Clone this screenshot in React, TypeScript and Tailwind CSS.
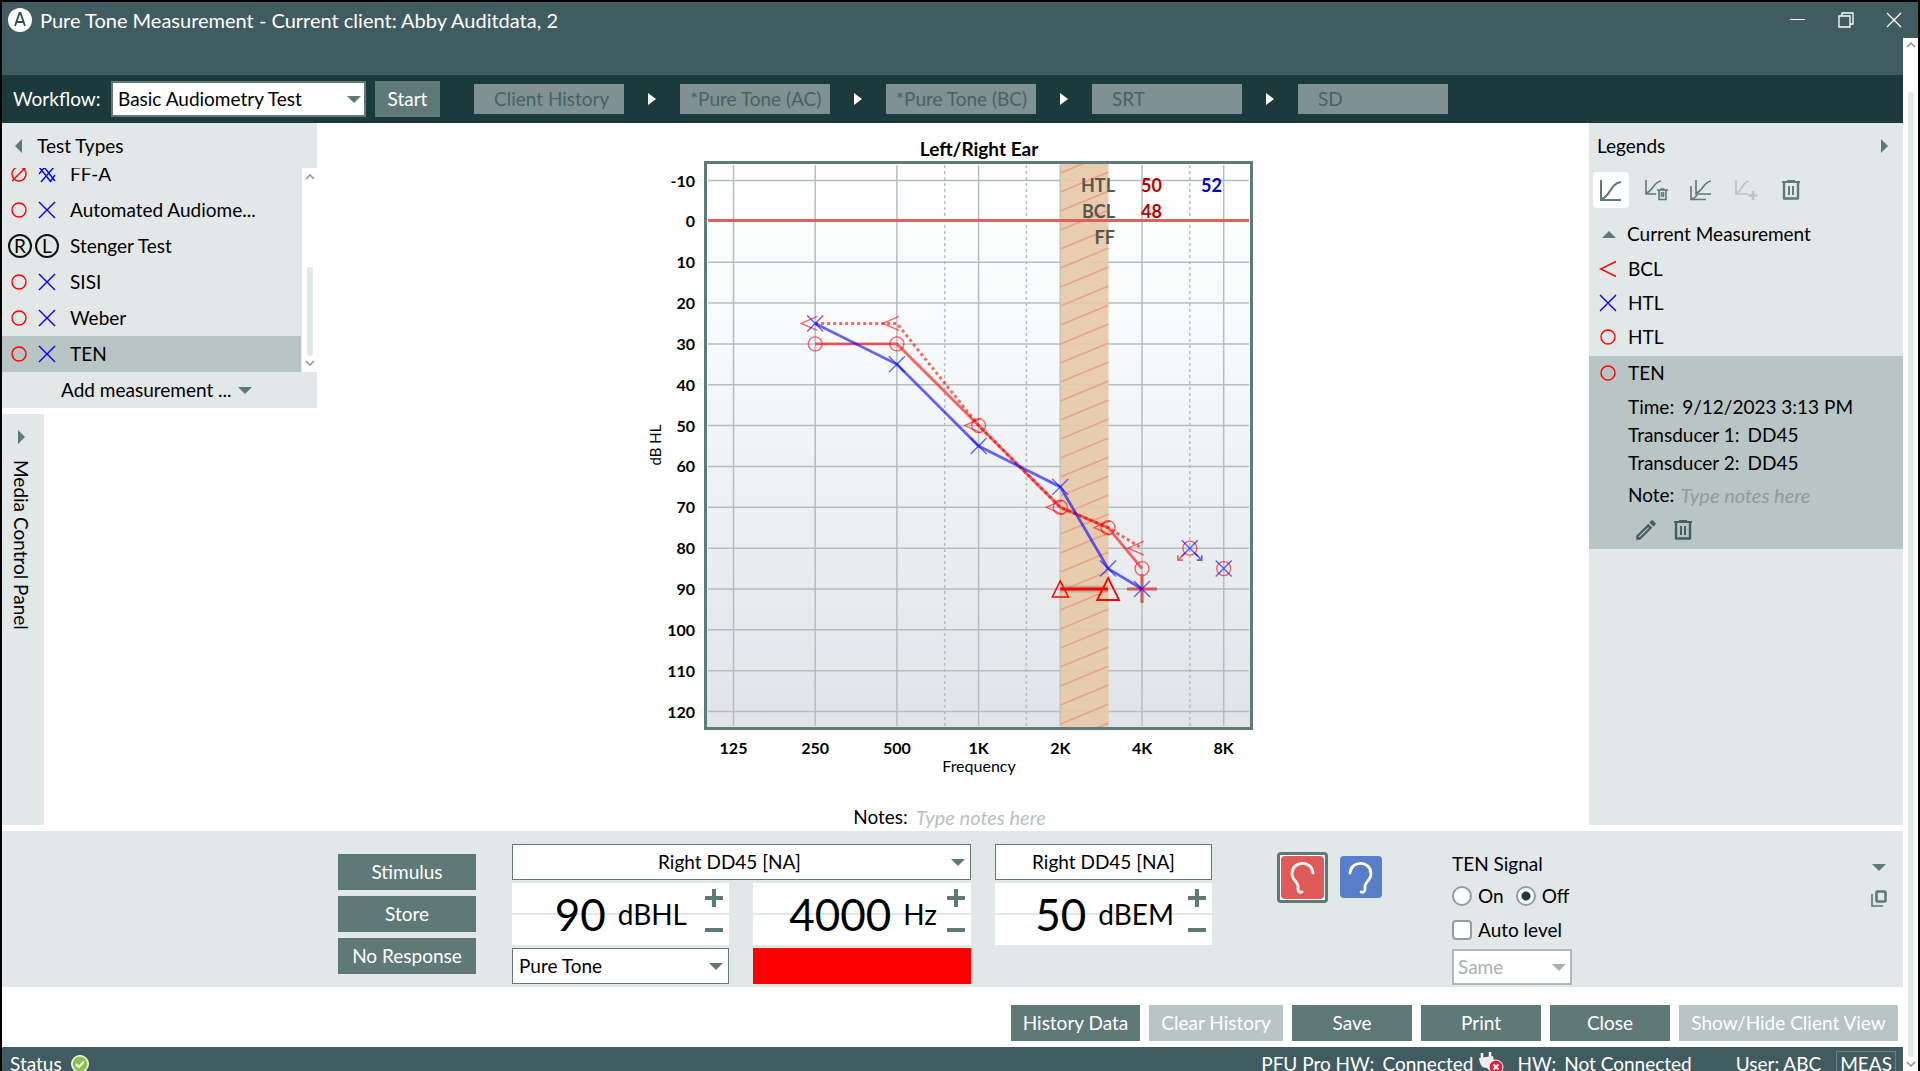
import React from "react";

const RED = "#ff0000";
const BLUE = "#0000ff";

type Mark = "circle" | "cross" | "less" | "circleSlash" | "doubleCross";

interface IMarkIconProps {
  mark: Mark;
  className?: string;
}

const MarkIcon: React.FC<IMarkIconProps> = ({ mark, className = "" }) => (
  <svg
    viewBox="0 0 18 18"
    fill="none"
    stroke={mark === "cross" || mark === "doubleCross" ? BLUE : RED}
    strokeWidth="1.4"
    className={`w-[18px] h-[18px] shrink-0 ${className}`}
  >
    {(mark === "circle" || mark === "circleSlash") && (
      <circle cx="9" cy="9" r="7" />
    )}
    {mark === "circleSlash" && <path d="M2 16 16 2" />}
    {mark === "cross" && <path d="M1 1 17 17M17 1 1 17" />}
    {mark === "doubleCross" && (
      <path d="M1 2 13 17M6 2 17 16M16 2 3 17M1 9 6 3M12 17 17 10" />
    )}
    {mark === "less" && <path d="M17 1.500 1.500 9 17 16.500" />}
  </svg>
);

interface ITriangleProps {
  dir: "up" | "down" | "left" | "right";
  className?: string;
}

const trianglePaths = {
  up: "M0 11 7 4 14 11Z",
  down: "M0 4H14L7 11Z",
  left: "M11 0V14L4 7Z",
  right: "M4 0V14L11 7Z",
};

const Triangle: React.FC<ITriangleProps> = ({ dir, className = "" }) => (
  <svg
    viewBox="0 0 14 14"
    className={`w-3.5 h-3.5 shrink-0 fill-[#5f7977] ${className}`}
  >
    <path d={trianglePaths[dir]} />
  </svg>
);

const TrashIcon: React.FC = () => (
  <svg viewBox="0 0 20 22" className="w-5 h-[22px]" fill="none" stroke="currentColor">
    <path d="M1 3H19M6 2H14" strokeWidth="2.200" />
    <path d="M3 4V19.500H17V4" strokeWidth="2.400" strokeLinejoin="round" />
    <path d="M8 7V16M12 7V16" strokeWidth="2" />
  </svg>
);

interface ISelectProps {
  label: string;
  value: string;
  className?: string;
  selectClass?: string;
  arrowClass?: string;
  disabled?: boolean;
}

const Select: React.FC<ISelectProps> = ({
  label,
  value,
  className = "",
  selectClass = "",
  arrowClass = "",
  disabled,
}) => (
  <div className={`relative h-9 ${className}`}>
    <select
      aria-label={label}
      disabled={disabled}
      className={`appearance-none w-full h-full bg-white border-[#5f7977] ${selectClass}`}
    >
      <option>{value}</option>
    </select>
    <Triangle
      dir="down"
      className={`absolute right-1.5 top-[11px] pointer-events-none ${arrowClass}`}
    />
  </div>
);

const steps = [
  { name: "Client History", pad: "pl-5" },
  { name: "*Pure Tone (AC)", pad: "pl-2.5" },
  { name: "*Pure Tone (BC)", pad: "pl-2.5" },
  { name: "SRT", pad: "pl-5" },
  { name: "SD", pad: "pl-5" },
];

const TitleBar: React.FC = () => (
  <header className="flex items-center h-9 shrink-0 bg-[#415c60] text-white">
    <svg viewBox="0 0 24 24" className="w-6 h-6 ml-1.5 mr-2">
      <circle cx="12" cy="12" r="12" fill="#fff" />
      <path
        d="M7 18 11.500 5H12.500L17 18M8.500 14H15.500"
        fill="none"
        stroke="#2f4b4e"
        strokeWidth="1.800"
      />
    </svg>
    <h1 className="text-[20px]">
      Pure Tone Measurement - Current client: Abby Auditdata, 2
    </h1>
    <div className="flex gap-8 ml-auto mr-4">
      <button aria-label="Minimize">
        <svg viewBox="0 0 16 16" className="w-4 h-4" stroke="#fff">
          <path d="M0 7.500H15" />
        </svg>
      </button>
      <button aria-label="Restore">
        <svg viewBox="0 0 16 16" className="w-4 h-4" fill="none" stroke="#fff" strokeWidth="1.300">
          <path d="M1 4H12V15H1ZM4 4V1H15V12H12" />
        </svg>
      </button>
      <button aria-label="Close window">
        <svg viewBox="0 0 16 16" className="w-4 h-4" stroke="#fff" strokeWidth="1.300">
          <path d="M1 1 15 15M15 1 1 15" />
        </svg>
      </button>
    </div>
  </header>
);

const WorkflowBar: React.FC = () => (
  <div className="flex items-center h-12 shrink-0 pl-[11px] bg-[#1c393c] text-white">
    <span className="w-[98px]">Workflow:</span>
    <Select
      label="Workflow"
      value="Basic Audiometry Test"
      className="w-[255px] text-black"
      selectClass="border-2 pl-[5px]"
      arrowClass="right-[5px]"
    />
    <button className="w-[65px] h-9 ml-[9px] mr-[34px] bg-[#5f7977]">Start</button>
    {steps.map((step, i) => (
      <React.Fragment key={step.name}>
        {i > 0 && (
          <span className="flex justify-center w-14">
            <svg viewBox="0 0 8 12" className="w-2 h-3 fill-white">
              <path d="M0 0 8 6 0 12Z" />
            </svg>
          </span>
        )}
        <button
          disabled
          className={`w-[150px] h-[30px] bg-[#7f9192] text-[#4b6163] text-left whitespace-nowrap ${step.pad}`}
        >
          {step.name}
        </button>
      </React.Fragment>
    ))}
  </div>
);

const tests: { name: string; marks: Mark[] }[] = [
  { name: "FF-A", marks: ["circleSlash", "doubleCross"] },
  { name: "Automated Audiome...", marks: ["circle", "cross"] },
  { name: "Stenger Test", marks: [] },
  { name: "SISI", marks: ["circle", "cross"] },
  { name: "Weber", marks: ["circle", "cross"] },
  { name: "TEN", marks: ["circle", "cross"] },
];

const Chevron: React.FC<{ down?: boolean }> = ({ down }) => (
  <svg viewBox="0 0 10 6" className="w-2.5 h-1.5" fill="none" stroke="#8d9494" strokeWidth="1.600">
    <path d={down ? "M1 1 5 5 9 1" : "M1 5 5 1 9 5"} />
  </svg>
);

const TestTypes: React.FC = () => (
  <section className="w-[315px] bg-[#e2e7e7]">
    <h2 className="flex items-center h-[45px] pl-[9px] gap-3">
      <Triangle dir="left" />
      Test Types
    </h2>
    <div className="flex h-[204px]">
      <ul className="flex flex-col justify-end flex-1 overflow-hidden">
        {tests.map((test) => (
          <li
            key={test.name}
            className={`flex items-center h-9 shrink-0 ${
              test.name === "TEN" ? "bg-[#b9c4c4]" : ""
            }`}
          >
            <span className="flex items-center w-[68px] pl-2 gap-2.5">
              {test.marks.map((mark) => (
                <MarkIcon key={mark} mark={mark} />
              ))}
              {test.marks.length === 0 && (
                <span className="flex gap-[3px] -ml-0.5">
                  {["R", "L"].map((side) => (
                    <span
                      key={side}
                      className="flex items-center justify-center w-6 h-6 border-2 border-[#111] rounded-full"
                    >
                      {side}
                    </span>
                  ))}
                </span>
              )}
            </span>
            {test.name}
          </li>
        ))}
      </ul>
      <div className="flex flex-col items-center w-[15px] ml-px py-1.5 bg-white">
        <Chevron />
        <span className="w-1.5 h-[90px] mt-[87px] mb-1 rounded-full bg-[#e2e7e7]" />
        <Chevron down />
      </div>
    </div>
    <button className="flex items-center h-9 pl-[59px] gap-1.5">
      Add measurement ...
      <Triangle dir="down" />
    </button>
  </section>
);

// chart geometry
const xAt = (hz: number) => 85.5 + Math.log2(hz / 125) * 81.7;
const yAt = (db: number) => 44.5 + (db + 10) * 4.085;

type Point = [number, number];

const rightHtl: Point[] = [[250, 30], [500, 30], [1000, 50], [2000, 70], [3000, 75], [4000, 85]];
const rightBcl: Point[] = [[250, 25], [500, 25], [1000, 50], [2000, 70], [3000, 75], [4000, 80]];
const leftHtl: Point[] = [[250, 25], [500, 35], [1000, 55], [2000, 65], [3000, 85], [4000, 90]];
const isolated: Point[] = [[6000, 80], [8000, 85]];

const toLine = (points: Point[]) =>
  points.map(([hz, db]) => `${xAt(hz)},${yAt(db)}`).join(" ");

const octaves = [
  { hz: 125, label: "125" },
  { hz: 250, label: "250" },
  { hz: 500, label: "500" },
  { hz: 1000, label: "1K" },
  { hz: 2000, label: "2K" },
  { hz: 4000, label: "4K" },
  { hz: 8000, label: "8K" },
];

const levels = Array.from({ length: 14 }, (_, i) => i * 10 - 10);

const Audiogram: React.FC = () => (
  <svg viewBox="0 0 608 650" className="w-[608px] h-[650px] shrink-0">
    <defs>
      <linearGradient id="plot" x1="0" y1="0" x2="0" y2="1">
        <stop offset="0" stopColor="#fff" />
        <stop offset="0.300" stopColor="#f8fafb" />
        <stop offset="1" stopColor="#e0e4e8" />
      </linearGradient>
      <pattern id="hatch" width="48" height="19" patternUnits="userSpaceOnUse" x="412.500" y="36">
        <path
          d="M-2 20.800 50 -.8M-2 1.800 50 -19.800M-2 39.800 50 18.200"
          stroke="#e39a80"
          strokeOpacity="0.800"
          strokeWidth="1.600"
        />
      </pattern>
    </defs>
    <text x="331" y="20" textAnchor="middle" className="text-[19px] font-bold">
      Left/Right Ear
    </text>
    <rect x="57.500" y="26.500" width="546" height="566" fill="url(#plot)" stroke="#5f7b79" strokeWidth="3" />
    <g stroke="#b6bcc0" strokeWidth="1.500">
      {levels.map((db) => (
        <path key={db} d={`M60 ${yAt(db)}H601`} />
      ))}
      {octaves.map(({ hz }) => (
        <path key={hz} d={`M${xAt(hz)} 29V590`} />
      ))}
      {[750, 1500, 6000].map((hz) => (
        <path key={hz} d={`M${xAt(hz)} 29V590`} strokeDasharray="3 3" />
      ))}
    </g>
    <rect x="412.500" y="28" width="48" height="563" fill="#e6c9a8" fillOpacity="0.920" />
    <rect x="412.500" y="28" width="48" height="563" fill="url(#hatch)" />
    <path d="M60 84.500H601" stroke="#dc625c" strokeWidth="3" />

    <g className="text-[16px] font-bold">
      {levels.map((db) => (
        <text key={db} x="47" y={yAt(db) + 6} textAnchor="end">
          {db}
        </text>
      ))}
      {octaves.map(({ hz, label }) => (
        <text key={hz} x={xAt(hz)} y="618" textAnchor="middle">
          {label}
        </text>
      ))}
    </g>
    <text x="331" y="636" textAnchor="middle" className="text-[16px]">
      Frequency
    </text>
    <text transform="translate(13 309) rotate(-90)" textAnchor="middle" className="text-[15px]">
      dB HL
    </text>

    <g className="text-[18px] font-bold" fill="#595450">
      <text x="467" y="56" textAnchor="end">HTL</text>
      <text x="467" y="82" textAnchor="end">BCL</text>
      <text x="467" y="108" textAnchor="end">FF</text>
      <text x="493" y="56" fill="#b80000">50</text>
      <text x="493" y="82" fill="#b80000">48</text>
      <text x="553" y="56" fill="#0000c8">52</text>
    </g>

    <g fill="none" stroke={RED} strokeOpacity="0.600">
      <polyline points={toLine(rightHtl)} strokeWidth="2.800" />
      <polyline points={toLine(rightBcl)} strokeWidth="3" strokeDasharray="3 3" />
      {[...rightHtl, ...isolated].map(([hz, db]) => (
        <circle key={hz} cx={xAt(hz)} cy={yAt(db)} r="7" strokeWidth="1.400" />
      ))}
      {rightBcl.map(([hz, db]) => (
        <path
          key={hz}
          d={`M${xAt(hz) + 2} ${yAt(db) - 7}l-16 7 16 7`}
          strokeWidth="1.400"
        />
      ))}
      <path d={`M${xAt(6000) - 5} ${yAt(80) + 5}l-7 7m0 -5v5h5`} strokeWidth="1.600" />
    </g>

    <path
      d={`M${xAt(4000) - 15} ${yAt(90)}h30m-15 -15v29`}
      stroke="#dc5550"
      strokeWidth="3"
    />

    <g fill="none" stroke={BLUE} strokeOpacity="0.600">
      <polyline points={toLine(leftHtl)} strokeWidth="2.800" />
      {[...leftHtl, ...isolated].map(([hz, db]) => (
        <path
          key={hz}
          d={`M${xAt(hz) - 8} ${yAt(db) - 8}l16 16m0 -16l-16 16`}
          strokeWidth="1.400"
        />
      ))}
      <path d={`M${xAt(6000) + 5} ${yAt(80) + 5}l7 7m0 -5v5h-5`} strokeWidth="1.600" />
    </g>

    <g fill="none" stroke={RED}>
      <path d={`M${xAt(2000)} ${yAt(90)}H${xAt(3000)}`} stroke="#8a8a70" strokeOpacity="0.400" strokeWidth="7" />
      <path d={`M${xAt(2000)} ${yAt(90)}H${xAt(3000)}`} strokeWidth="3" />
      <path d={`M${xAt(2000)} ${yAt(90) - 8}l8 16h-16z`} strokeWidth="1.500" />
      <path d={`M${xAt(3000)} ${yAt(90) - 11}l11 22h-22z`} strokeWidth="1.800" />
    </g>
  </svg>
);

const toolIcons = [
  {
    name: "Show curve",
    tone: "bg-white text-[#5f7977]",
    icon: (
      <g strokeWidth="2">
        <path d="M2 1V21H22" />
        <path d="M2 20C11 19 11 4 22 3" />
      </g>
    ),
  },
  {
    name: "Delete curve",
    tone: "text-[#5f7977]",
    icon: (
      <g strokeWidth="1.600">
        <path d="M2 1V15H12" />
        <path d="M2 14C9 13 9 3 17 2" />
        <path d="M13 11H24M15 11V20.500H22V11M17.500 13V18M19.500 13V18M16.500 10H20.500" />
      </g>
    ),
  },
  {
    name: "Compare curves",
    tone: "text-[#5f7977]",
    icon: (
      <g strokeWidth="1.600">
        <path d="M7 1V15H22" />
        <path d="M7 14C14 13 14 3 22 2" />
        <path d="M2 7V20.500H17M2 20C5 19.500 7 18 8 15.500" />
      </g>
    ),
  },
  {
    name: "Add curve",
    tone: "text-[#b9c4c4]",
    icon: (
      <g strokeWidth="1.600">
        <path d="M2 1V15H14" />
        <path d="M2 14C8 13 8 3 15 2" />
        <path d="M19 12V21M14.500 16.500H23.500" strokeWidth="2.600" />
      </g>
    ),
  },
];

const legend: { name: string; mark: Mark }[] = [
  { name: "BCL", mark: "less" },
  { name: "HTL", mark: "cross" },
  { name: "HTL", mark: "circle" },
];

const Legends: React.FC = () => (
  <aside className="w-[314px] shrink-0 mb-1.5 bg-[#e2e7e7]">
    <h2 className="flex items-center justify-between h-[45px] pl-2 pr-3">
      Legends
      <Triangle dir="right" />
    </h2>
    <div className="flex gap-[9px] pl-1 pt-1">
      {toolIcons.map((tool) => (
        <button
          key={tool.name}
          aria-label={tool.name}
          className={`flex items-center justify-center w-9 h-9 rounded-sm ${tool.tone}`}
        >
          <svg viewBox="0 0 24 22" className="w-6 h-[22px]" fill="none" stroke="currentColor">
            {tool.icon}
          </svg>
        </button>
      ))}
      <button
        aria-label="Delete all"
        className="flex items-center justify-center w-9 h-9 text-[#5f7977]"
      >
        <TrashIcon />
      </button>
    </div>
    <h3 className="flex items-center h-[52px] pl-[13px] gap-[11px]">
      <Triangle dir="up" />
      Current Measurement
    </h3>
    <ul className="-mt-2">
      {legend.map((item) => (
        <li key={item.name + item.mark} className="flex items-center h-[34px] pl-2.5 gap-[11px]">
          <MarkIcon mark={item.mark} />
          {item.name}
        </li>
      ))}
    </ul>
    <div className="h-[193px] mt-0.5 bg-[#b9c4c4]">
      <div className="flex items-center h-[34px] pl-2.5 gap-[11px]">
        <MarkIcon mark="circle" />
        TEN
      </div>
      <dl className="pl-[39px] leading-7">
        <div className="flex gap-2 mt-[3px]">
          <dt>Time:</dt>
          <dd>9/12/2023 3:13 PM</dd>
        </div>
        <div className="flex gap-2">
          <dt>Transducer 1:</dt>
          <dd>DD45</dd>
        </div>
        <div className="flex gap-2">
          <dt>Transducer 2:</dt>
          <dd>DD45</dd>
        </div>
      </dl>
      <label className="flex items-center h-9 pl-[39px] gap-1.5">
        Note:
        <input
          placeholder="Type notes here"
          className="w-40 text-[20px] italic placeholder:text-[#8f9c9c]"
        />
      </label>
      <div className="flex items-center gap-3.5 pl-11 pt-1 text-[#465e60]">
        <button aria-label="Edit">
          <svg viewBox="0 0 24 24" className="w-[26px] h-[26px]" fill="currentColor">
            <path d="M14 9.500 14.700 10.200 6.200 18.700H5.300V17.800L14 9.500M17.660 3c-.25 0-.51.1-.7.290l-1.830 1.830 3.750 3.750 1.830-1.830c.39-.39.39-1.020 0-1.410l-2.340-2.340c-.2-.2-.45-.29-.71-.29zM14.060 6.190 3 17.250V21h3.750L17.810 9.940l-3.750-3.750z" fillRule="evenodd" />
          </svg>
        </button>
        <button aria-label="Delete">
          <TrashIcon />
        </button>
      </div>
    </div>
  </aside>
);

interface IStepperProps {
  label: string;
  value: string;
  unit: string;
  unitClass?: string;
}

const Stepper: React.FC<IStepperProps> = ({
  label,
  value,
  unit,
  unitClass = "mr-[18px]",
}) => (
  <div
    aria-label={label}
    className="flex items-center justify-end h-[62px] pr-1.5 bg-[linear-gradient(#fff_30px,#e2e7e7_30px,#e2e7e7_32px,#fff_32px)]"
  >
    <span className="text-[44px] leading-none">{value}</span>
    <span className={`ml-3 text-[28px] leading-none ${unitClass}`}>{unit}</span>
    <div className="flex flex-col gap-3.5">
      <button aria-label={`Increase ${label}`}>
        <svg viewBox="0 0 18 18" className="w-[18px] h-[18px]" stroke="#5f7977" strokeWidth="4">
          <path d="M0 9H18M9 0V18" />
        </svg>
      </button>
      <button aria-label={`Decrease ${label}`}>
        <svg viewBox="0 0 18 18" className="w-[18px] h-[18px]" stroke="#5f7977" strokeWidth="4">
          <path d="M0 9H18" />
        </svg>
      </button>
    </div>
  </div>
);

const EarIcon: React.FC<{ flip?: boolean }> = ({ flip }) => (
  <svg viewBox="0 0 42 42" className="w-[42px] h-[42px]" fill="none" stroke="#fff" strokeWidth="2.800" strokeLinecap="round">
    <path
      d={
        flip
          ? "M10 17C11 4 31 4 31 18C31 24 24 27 25 31C25.500 35 24 37 21 36"
          : "M32 17C31 4 11 4 11 18C11 24 18 27 17 31C16.500 35 18 37 21 36"
      }
    />
  </svg>
);

const radioClass =
  "appearance-none w-5 h-5 mr-1.5 rounded-full border-2 border-[#8fa09f] bg-white checked:bg-[radial-gradient(#1c393c_4px,#fff_5px)]";

const ControlPanel: React.FC = () => (
  <section className="flex h-[156px] shrink-0 bg-[#e2e7e7]">
    <div className="flex flex-col gap-1.5 w-[138px] ml-[336px] mt-[23px]">
      {["Stimulus", "Store", "No Response"].map((name) => (
        <button key={name} className="h-9 bg-[#5f7977] text-white">
          {name}
        </button>
      ))}
    </div>
    <div className="grid grid-cols-[217px_218px] gap-x-6 gap-y-[3px] content-start ml-9 mt-[13px]">
      <Select
        label="Transducer"
        value="Right DD45 [NA]"
        className="col-span-2"
        selectClass="border pr-6 text-center"
      />
      <Stepper label="level" value="90" unit="dBHL" />
      <Stepper label="frequency" value="4000" unit="Hz" unitClass="mr-2.5" />
      <Select label="Signal" value="Pure Tone" selectClass="border pl-1.5" />
      <div className="h-9 bg-[#ff0000]" />
    </div>
    <div className="flex flex-col gap-[3px] w-[217px] ml-6 mt-[13px]">
      <button className="h-9 border border-[#5f7977] bg-white">
        Right DD45 [NA]
      </button>
      <Stepper label="masking" value="50" unit="dBEM" unitClass="mr-3.5" />
    </div>
    <div className="flex items-start gap-3 ml-[65px] mt-[21px]">
      <button
        aria-label="Right ear"
        className="p-px border-[3px] border-[#5f7977] rounded bg-white"
      >
        <span className="block w-[43px] h-[43px] rounded-sm bg-[#e05a5a]">
          <EarIcon />
        </span>
      </button>
      <button aria-label="Left ear" className="mt-1 rounded-sm bg-[#587dc9]">
        <EarIcon flip />
      </button>
    </div>
    <fieldset className="ml-[70px] mt-[15px]">
      <legend className="h-9 float-left leading-9">TEN Signal</legend>
      <div className="flex items-center gap-3 h-7 clear-both">
        <label className="flex items-center">
          <input type="radio" name="ten" className={radioClass} />
          On
        </label>
        <label className="flex items-center">
          <input type="radio" name="ten" defaultChecked className={radioClass} />
          Off
        </label>
      </div>
      <label className="flex items-center h-[39px]">
        <input
          type="checkbox"
          className="appearance-none w-5 h-5 mr-1.5 border-2 border-[#8fa09f] rounded-sm bg-white"
        />
        Auto level
      </label>
      <Select
        label="Level mode"
        value="Same"
        disabled
        className="w-[120px]"
        selectClass="border-2 border-[#b3b8b8] pl-1 text-[#a9afaf]"
        arrowClass="fill-[#a9afaf]"
      />
    </fieldset>
    <div className="flex flex-col items-center gap-4 ml-auto mr-4 mt-[29px]">
      <Triangle dir="down" />
      <button aria-label="Copy">
        <svg viewBox="0 0 16 17" className="w-4 h-[17px]" fill="none" stroke="#5f7977">
          <rect x="5.500" y="1.500" width="9" height="10" strokeWidth="2.600" rx="1" />
          <path d="M1 4V16H12" strokeWidth="1.600" />
        </svg>
      </button>
    </div>
  </section>
);

const actions = [
  { name: "History Data", className: "w-[129px] bg-[#5f7977]" },
  { name: "Clear History", className: "w-[134px] bg-[#b9c4c4]", disabled: true },
  { name: "Save", className: "w-[120px] bg-[#5f7977]" },
  { name: "Print", className: "w-[120px] bg-[#5f7977]" },
  { name: "Close", className: "w-[120px] bg-[#5f7977]" },
  { name: "Show/Hide Client View", className: "w-[219px] bg-[#b9c4c4]", disabled: true },
];

const StatusBar: React.FC = () => (
  <footer className="flex items-start h-6 shrink-0 pl-2 pr-[7px] pt-1 overflow-hidden bg-[#415c60] text-white">
    <span className="w-[61px]">Status</span>
    <svg viewBox="0 0 18 18" className="w-[18px] h-[18px] mt-1">
      <circle cx="9" cy="9" r="8.200" fill="#8cc152" stroke="#fff" strokeWidth="1.500" />
      <path d="M5 9.200 8 12 13 6.500" fill="none" stroke="#fff" strokeWidth="2" />
    </svg>
    <span className="ml-auto">PFU Pro HW:</span>
    <span className="ml-2">Connected</span>
    <svg viewBox="0 0 26 26" className="w-[26px] h-[26px] ml-1.5 mr-3 shrink-0">
      <path d="M3 2V7M11 1V6" stroke="#fff" strokeWidth="2.500" />
      <path d="M0 7 14 5 15 10C15 14 12 17 12 21L8 17C3 17 1 14 0 7Z" fill="#e9eeee" />
      <circle cx="17" cy="16" r="7" fill="#e01f45" stroke="#fff" />
      <path d="M14.500 13.500 19.500 18.500M19.500 13.500 14.500 18.500" stroke="#fff" strokeWidth="1.800" />
    </svg>
    <span>HW:</span>
    <span className="ml-2">Not Connected</span>
    <span className="ml-11">User: ABC</span>
    <span className="ml-[15px] px-[3px] border border-[#6b8284] leading-6">MEAS</span>
  </footer>
);

const App: React.FC = () => {
  return (
    <div className="flex flex-col h-screen overflow-hidden border-t-2 border-x-2 border-black bg-white font-['Lato',sans-serif] text-[19px] leading-[26px] text-black">
      <TitleBar />
      <div className="flex flex-1 min-h-0">
        <div className="flex flex-col flex-1 min-w-0">
          <div className="h-[37px] shrink-0 bg-[#415c60]" />
          <WorkflowBar />
          <main className="flex flex-1 min-h-0">
            <div className="flex flex-col gap-1.5 pb-1.5 w-[315px] shrink-0">
              <TestTypes />
              <button className="flex flex-col items-center flex-1 w-[42px] pt-4 pr-1 gap-4 bg-[#e2e7e7]">
                <Triangle dir="right" />
                <span className="[writing-mode:vertical-rl]">
                  Media Control Panel
                </span>
              </button>
            </div>
            <div className="flex flex-col items-center flex-1 min-w-0 pt-[13px] pr-0.5">
              <Audiogram />
              <label className="flex items-center gap-2 mt-[18px]">
                Notes:
                <input
                  placeholder="Type notes here"
                  className="w-[135px] text-[20px] italic placeholder:text-[#b9c0c0]"
                />
              </label>
            </div>
            <Legends />
          </main>
          <ControlPanel />
          <div className="flex justify-end gap-[9px] shrink-0 pt-[18px] pb-1.5 pr-[5px] text-white">
            {actions.map((action) => (
              <button
                key={action.name}
                disabled={action.disabled}
                className={`h-9 whitespace-nowrap ${action.className}`}
              >
                {action.name}
              </button>
            ))}
          </div>
          <StatusBar />
        </div>
        <div className="flex flex-col items-center w-[15px] shrink-0 py-1 bg-white">
          <Chevron />
          <span className="flex-1 w-1.5 mt-11 mb-1 rounded-full bg-[#e2e7e7]" />
          <Chevron down />
        </div>
      </div>
    </div>
  );
};

export default App;
